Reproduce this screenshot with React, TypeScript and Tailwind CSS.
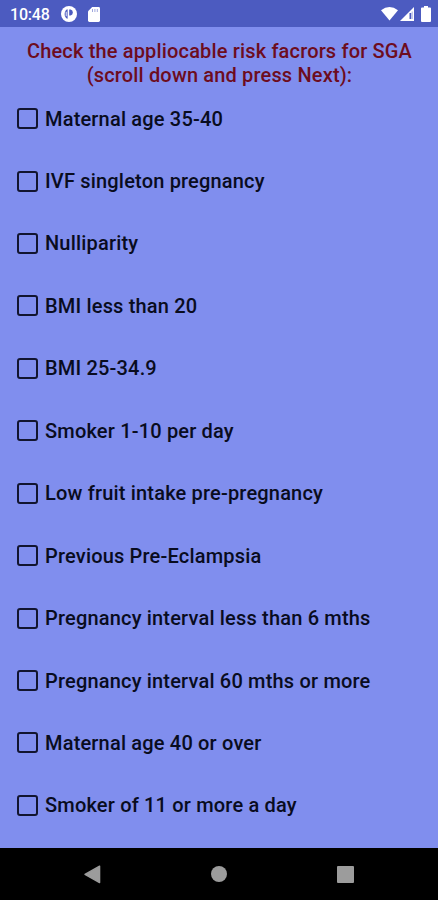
const RISK_FACTORS = [
  { id: 'age35', label: 'Maternal age 35-40' },
  { id: 'ivf', label: 'IVF singleton pregnancy' },
  { id: 'nulliparity', label: 'Nulliparity' },
  { id: 'bmi20', label: 'BMI less than 20' },
  { id: 'bmi25', label: 'BMI 25-34.9' },
  { id: 'smoker1', label: 'Smoker 1-10 per day' },
  { id: 'fruit', label: 'Low fruit intake pre-pregnancy' },
  { id: 'preeclampsia', label: 'Previous Pre-Eclampsia' },
  { id: 'interval6', label: 'Pregnancy interval less than 6 mths' },
  { id: 'interval60', label: 'Pregnancy interval 60 mths or more' },
  { id: 'age40', label: 'Maternal age 40 or over' },
  { id: 'smoker11', label: 'Smoker of 11 or more a day' },
];

function StatusBar() {
  return (
    <header className="h-[27px] shrink-0 flex items-center bg-[#4c5bc0] pl-[10px] pr-[7px] text-white">
      <span className="w-[51px] text-[16px] leading-none font-medium tracking-[-0.2px] pt-[2px]">10:48</span>
      <svg width="16" height="16" viewBox="0 0 16 16">
        <circle cx="8" cy="8" r="8" fill="#fff" />
        <path d="M6.6 3.2V12.8C2.6 12 2.6 4 6.6 3.2Z" fill="#4c5bc0" />
        <path d="M8.2 3.6H9.6A3 3 0 0 1 9.6 9.4H8.2Z" fill="#4c5bc0" />
        <path d="M5.2 5.8V10.2" stroke="#fff" strokeWidth="0.9" />
      </svg>
      <svg className="ml-[11px] mt-px" width="12" height="15" viewBox="0 0 12 15">
        <path d="M4.2 0H10.6Q12 0 12 1.4V13.6Q12 15 10.6 15H1.4Q0 15 0 13.6V4.2Z" fill="#fff" />
        <path d="M4.5 2v3M6.9 2v3M9.3 2v3" stroke="#4c5bc0" strokeWidth="0.9" strokeOpacity="0.6" />
      </svg>
      <div className="ml-auto flex items-center">
        <svg width="17" height="14" viewBox="0 0 17 14">
          <path d="M0 3.2Q8.5-3 17 3.2L8.5 13.6Z" fill="#fff" />
        </svg>
        <svg className="ml-[2px]" width="14" height="14" viewBox="0 0 14 14">
          <path d="M14 0V14H0Z" fill="#fff" />
          <path d="M10.4 6V12" stroke="#4c5bc0" strokeWidth="1.8" />
          <path d="M12.2 4.5V12" stroke="#aab1e4" strokeWidth="1" />
        </svg>
        <svg className="ml-[7px]" width="10" height="16" viewBox="0 0 10 16">
          <path d="M3 0H7V1.6H9Q10 1.6 10 2.6V15Q10 16 9 16H1Q0 16 0 15V2.6Q0 1.6 1 1.6H3Z" fill="#fff" />
        </svg>
      </div>
    </header>
  );
}

function NavBar() {
  return (
    <nav className="h-[52px] shrink-0 flex items-center justify-between bg-black pl-[84px] pr-[84px] text-[#9c9c9c]">
      <svg width="17" height="19" viewBox="0 0 17 19">
        <path d="M15.6 1.2V17.6L1 9.4Z" fill="currentColor" stroke="currentColor" strokeWidth="1.4" strokeLinejoin="round" />
      </svg>
      <span className="w-4 h-4 rounded-full bg-[#9c9c9c]" />
      <span className="w-[17px] h-[17px] rounded-[1px] bg-[#9c9c9c]" />
    </nav>
  );
}

export default function App() {
  return (
    <div className="w-full h-screen flex flex-col overflow-hidden bg-[#808eee] font-['Roboto',sans-serif]">
      <StatusBar />
      <main className="flex-1 min-h-0 overflow-hidden">
        <h1 className="pt-[11.5px] pl-px text-center text-[20px] leading-[24px] font-medium tracking-[0.16px] text-[#6d0c20]">
          Check the appliocable risk facrors for SGA
          <br />
          (scroll down and press Next):
        </h1>
        <div className="pt-[0.9px]">
          {RISK_FACTORS.map(factor => (
            <label key={factor.id} className="h-[62.45px] flex items-center pl-[17px]">
              <input
                type="checkbox"
                className="appearance-none w-[21px] h-[21px] mr-[7px] rounded-[3px] border-2 border-[#12152f] checked:bg-[#12152f]"
              />
              <span className="text-[20px] leading-6 font-medium tracking-[0.18px] text-[#090c20]">{factor.label}</span>
            </label>
          ))}
        </div>
      </main>
      <NavBar />
    </div>
  );
}
